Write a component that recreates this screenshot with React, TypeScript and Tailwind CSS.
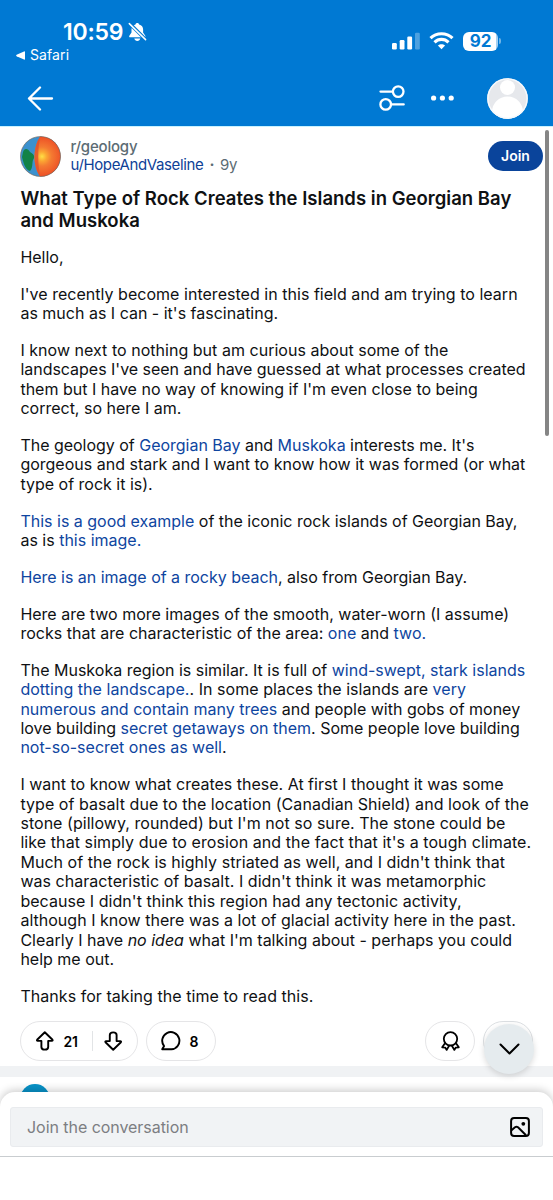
import React from "react";

function L({ children }: { children: React.ReactNode }) {
  return <span className="text-[#0e45a0]">{children}</span>;
}

function Para({ children }: { children: React.ReactNode }) {
  return <p className="whitespace-nowrap">{children}</p>;
}

function StatusBar() {
  return (
    <div className="flex h-[70px] shrink-0 justify-between">
      <div className="pl-4 pt-[18px]">
        <div className="flex h-7 items-center pl-[47px]">
          <span className="text-[23px] font-semibold leading-7 tracking-[-0.250px]">10:59</span>
          <svg className="ml-[4.500px]" width="19" height="20" viewBox="0 0 19 20" fill="none">
            <path d="M9.3 1c1 0 1.6.6 1.800 1.400 2.600.7 4 2.600 4 5v3.200l2 2.800c.7 1 .4 1.900-.8 1.900H2.300c-1.200 0-1.500-.9-.8-1.900l2-2.800V7.400c0-2.400 1.400-4.300 4-5C7.700 1.600 8.300 1 9.300 1z" fill="white" />
            <path d="M6.300 16.500h6c-.4 1.600-1.400 2.400-3 2.400s-2.600-.8-3-2.400z" fill="white" />
            <path d="M1.600 1.500l16 16" stroke="#0079d3" strokeWidth="3.400" />
            <path d="M1.300 1.600l16.300 16" stroke="white" strokeWidth="1.500" strokeLinecap="round" />
          </svg>
        </div>
        <div className="flex h-[18px] items-center gap-[5px]">
          <svg width="9" height="9" viewBox="0 0 9 9"><path d="M.6 3.700L8 .4Q9 0 9 1v7q0 1-1 .6L.6 5.300Q-.4 4.500.6 3.700z" fill="white" /></svg>
          <span className="text-[14px] leading-[18px] tracking-[0.100px]">Safari</span>
        </div>
      </div>
      <div className="mt-[31px] flex h-[20px] items-center pr-[52px]">
        <svg width="28" height="18" viewBox="0 0 28 18" fill="white">
          <rect x="0" y="11" width="4.800" height="6.500" rx="1.200" />
          <rect x="7.700" y="8" width="4.800" height="9.500" rx="1.200" />
          <rect x="15.300" y="4.600" width="4.800" height="12.900" rx="1.200" />
          <rect x="23" y=".7" width="4.800" height="16.800" rx="1.200" opacity=".3" />
        </svg>
        <svg className="ml-[9px]" width="25" height="18" viewBox="0 0 25 18" fill="none" stroke="white" strokeWidth="3.100">
          <path d="M1.500 6.200C7.500.3 17.500.3 23.500 6.200" />
          <path d="M5.500 10.300c4-3.900 10-3.900 14 0" />
          <path d="M12.500 17.300l-3.600-3.700c2.100-1.900 5.100-1.900 7.200 0z" fill="white" stroke="none" />
        </svg>
        <div className="ml-[9px] flex h-[19px] w-[35px] items-center justify-center rounded-[6px] bg-[linear-gradient(to_right,white_33px,#a6d1f1_33px)] text-[17px] font-bold leading-none tracking-[-0.200px] text-[#0079d3]">92</div>
        <div className="ml-[1px] h-[6px] w-[2px] rounded-r-full bg-[#71b5e6]" />
      </div>
    </div>
  );
}

function NavBar() {
  return (
    <div className="flex h-14 items-center pl-[27px] pr-[25px]">
      <svg width="27" height="25" viewBox="0 0 27 25" fill="none" stroke="white" strokeWidth="2.300" strokeLinecap="round" strokeLinejoin="round"><path d="M25 12.500H2M13 1.500L2 12.500l11 11" /></svg>
      <svg className="ml-auto" width="26" height="26" viewBox="0 0 26 26" fill="none" stroke="white" strokeWidth="2.300" strokeLinecap="round">
        <circle cx="19.200" cy="6.600" r="5.300" /><path d="M1.500 6.600h12.200M12.300 19.400h12.400" /><circle cx="6.700" cy="19.400" r="5.300" />
      </svg>
      <svg className="ml-[25px]" width="25" height="6" viewBox="0 0 25 6" fill="white"><circle cx="3.600" cy="3" r="2.600" /><circle cx="12.400" cy="3" r="2.600" /><circle cx="21.200" cy="3" r="2.600" /></svg>
      <svg className="ml-[32px]" width="41" height="41" viewBox="0 0 41 41">
        <defs><clipPath id="avatar"><circle cx="20.500" cy="20.500" r="20.300" /></clipPath></defs>
        <g clipPath="url(#avatar)"><rect width="41" height="41" fill="#e6e8ec" /><circle cx="20.500" cy="9.500" r="7.500" fill="white" /><circle cx="20.500" cy="34" r="15.500" fill="white" /></g>
        <circle cx="20.500" cy="20.500" r="19.600" fill="none" stroke="#f6f9fc" strokeWidth="1.400" />
      </svg>
    </div>
  );
}

function GeologyLogo() {
  return (
    <svg width="41" height="41" viewBox="0 0 41 41" className="shrink-0">
      <defs>
        <clipPath id="globe"><circle cx="20.500" cy="20.500" r="20" /></clipPath>
        <radialGradient id="core" cx="22" cy="20.500" r="19" gradientUnits="userSpaceOnUse">
          <stop offset="0" stopColor="#ffdf45" /><stop offset=".25" stopColor="#fba532" /><stop offset=".5" stopColor="#f47b32" /><stop offset="1" stopColor="#ee5327" />
        </radialGradient>
      </defs>
      <g clipPath="url(#globe)">
        <rect width="41" height="41" fill="#3c91ce" />
        <path d="M3 16c1-4 5-4 7 0 3 2 6 4 3 8-1 3 0 8-3 11C5 34 3 25 2 21z" fill="#128247" />
        <path d="M20.500 0C12.500 11 12.500 31 20.500 41H41V0z" fill="url(#core)" />
        <path d="M20.500 0C12.500 11 12.500 31 20.500 41 17.500 29 17.500 12 20.500 0z" fill="#df502c" opacity=".8" />
      </g>
      <circle cx="20.500" cy="20.500" r="20" fill="none" stroke="#79634f" strokeWidth=".6" />
    </svg>
  );
}

function PostHeader() {
  return (
    <div className="flex items-center pr-[10px]">
      <GeologyLogo />
      <div className="ml-[9px] text-[15px] leading-[18px]">
        <div className="font-medium tracking-[-0.200px] text-[#5c6c74]">r/geology</div>
        <div className="tracking-[-0.370px] text-[#5c6c74]"><span className="text-[#0e4197]">u/HopeAndVaseline</span><span className="mx-[6px] font-bold">·</span>9y</div>
      </div>
      <button className="ml-auto h-[30px] w-[55px] rounded-full bg-[#0a449b] text-[14px] font-semibold leading-[30px] text-white">Join</button>
    </div>
  );
}

function PostBody() {
  return (
    <div className="mt-[17px] flex flex-col gap-[17.400px] text-[16px] leading-[19.400px] text-[#0f1113]">
      <Para>Hello,</Para>
      <Para><span className="tracking-[0.030px]">I've recently become interested in this field and am trying to learn</span><br />as much as I can - it's fascinating.</Para>
      <Para><span className="tracking-[0.030px]">I know next to nothing but am curious about some of the</span><br /><span className="tracking-[-0.020px]">landscapes I've seen and have guessed at what processes created</span><br />them but I have no way of knowing if I'm even close to being<br />correct, so here I am.</Para>
      <Para><span className="tracking-[-0.020px]">The geology of <L>Georgian Bay</L> and <L>Muskoka</L> interests me. It's</span><br />gorgeous and stark and I want to know how it was formed (or what<br />type of rock it is).</Para>
      <Para><L>This is a good example</L> of the iconic rock islands of Georgian Bay,<br />as is <L>this image.</L></Para>
      <Para><span className="tracking-[-0.020px]"><L>Here is an image of a rocky beach</L>, also from Georgian Bay.</span></Para>
      <Para>Here are two more images of the smooth, water-worn (I assume)<br /><span className="tracking-[0.020px]">rocks that are characteristic of the area: <L>one</L> and <L>two.</L></span></Para>
      <Para>The Muskoka region is similar. It is full of <L>wind-swept, stark islands<br /><span className="tracking-[0.040px]">dotting the landscape.</span></L><span className="tracking-[0.040px]">. In some places the islands are <L>very</L></span><L><br />numerous and contain many trees</L> and people with gobs of money<br />love building <L>secret getaways on them</L>. Some people love building<br /><L>not-so-secret ones as well</L>.</Para>
      <Para>I want to know what creates these. At first I thought it was some<br /><span className="tracking-[0.050px]">type of basalt due to the location (Canadian Shield) and look of the</span><br /><span className="tracking-[0.040px]">stone (pillowy, rounded) but I'm not so sure. The stone could be</span><br /><span className="tracking-[0.080px]">like that simply due to erosion and the fact that it's a tough climate.</span><br /><span className="tracking-[0.040px]">Much of the rock is highly striated as well, and I didn't think that</span><br /><span className="tracking-[0.040px]">was characteristic of basalt. I didn't think it was metamorphic</span><br /><span className="tracking-[0.040px]">because I didn't think this region had any tectonic activity,</span><br /><span className="tracking-[0.020px]">although I know there was a lot of glacial activity here in the past.</span><br />Clearly I have <em>no idea</em> what I'm talking about - perhaps you could<br />help me out.</Para>
      <Para><span className="tracking-[0.050px]">Thanks for taking the time to read this.</span></Para>
    </div>
  );
}

const arrow = "M8.800 1.200L1.100 8.800q-.5 1 .6 1.100h3.700v6q0 2.700 3.400 2.700t3.400-2.700v-6h3.700q1.100-.1.600-1.100z";

function Actions() {
  return (
    <div className="mt-[15px] flex pr-[20px] text-[14px] font-semibold text-black">
      <div className="flex h-10 w-[118px] items-center rounded-full border border-[#e5e5e7] pl-[15px]">
        <svg width="18" height="20" viewBox="0 0 18 20" fill="none" stroke="currentColor" strokeWidth="1.900" strokeLinejoin="round"><path d={arrow} /></svg>
        <span className="ml-[9px] w-[29px]">21</span>
        <span className="h-5 w-px bg-[#e2e4e6]" />
        <svg className="ml-[11px] rotate-180" width="18" height="20" viewBox="0 0 18 20" fill="none" stroke="currentColor" strokeWidth="1.900" strokeLinejoin="round"><path d={arrow} /></svg>
      </div>
      <div className="ml-2 flex h-10 w-[70px] items-center rounded-full border border-[#e5e5e7] pl-[14px]">
        <svg width="20" height="20" viewBox="0 0 20 20" fill="none" stroke="currentColor" strokeWidth="1.900" strokeLinejoin="round"><path d="M1.200 18.300l1.900-3.200A8.600 8.600 0 1 1 10.400 18.300z" /></svg>
        <span className="ml-2">8</span>
      </div>
      <div className="ml-auto flex h-10 w-[50px] items-center justify-center rounded-full border border-[#e5e5e7]">
        <svg width="19" height="20" viewBox="0 0 19 20" fill="none" stroke="currentColor" strokeWidth="1.800" strokeLinejoin="round">
          <circle cx="9.500" cy="7.800" r="6.700" /><path d="M4 12.300l-2.800 4 3 .3 1.500 2.300 2.700-4.600M15 12.300l2.800 4-3 .3-1.500 2.300-2.700-4.600" />
        </svg>
      </div>
      <div className="relative ml-2 h-10 w-[50px] rounded-full border border-[#dcdfe2]">
        <div className="absolute left-0 top-[1.500px] flex size-[50px] items-center justify-center rounded-full bg-[#e5ebee] shadow-[0_2px_6px_rgba(0,0,0,0.15)]">
          <svg width="21" height="12" viewBox="0 0 21 12" fill="none" stroke="currentColor" strokeWidth="2" strokeLinecap="round" strokeLinejoin="round"><path d="M1.500 1.500l9 9 9-9" /></svg>
        </div>
      </div>
    </div>
  );
}

function Composer() {
  return (
    <div className="relative mt-[-4px] h-[108px] rounded-t-[15px] bg-white shadow-[0_-2px_9px_rgba(0,0,0,0.200)]">
      <div className="h-[65px] border-b border-[#c9cdd0] px-[10px] pt-[15px]">
        <div className="flex h-10 items-center justify-between rounded-[3px] border border-[#e9ebee] bg-[#f1f3f5] pl-4 pr-3">
          <span className="text-[16px] tracking-[-0.050px] text-[#7c7e82]">Join the conversation</span>
          <svg width="20" height="20" viewBox="0 0 20 20" fill="none" stroke="black" strokeWidth="2" strokeLinejoin="round">
            <rect x="1.100" y="1.100" width="17.800" height="17.800" rx="3" /><circle cx="13.300" cy="6.800" r="1.900" fill="black" stroke="none" /><path d="M1.500 13.300L5 10.300q1.500-1.100 3 0l8 8" />
          </svg>
        </div>
      </div>
    </div>
  );
}

export default function App() {
  return (
    <main className="flex h-[1200px] w-[553px] flex-col overflow-hidden bg-white font-['Inter',sans-serif]">
      <header className="h-[126px] shrink-0 bg-[#0079d3] text-white"><StatusBar /><NavBar /></header>
      <div className="relative h-[940px] shrink-0 border-t border-[#c9f2ff] pl-[20.400px] pt-[8.500px]">
        <PostHeader />
        <h1 className="mt-[10.500px] whitespace-nowrap text-[18.500px] font-semibold leading-[22px] tracking-[0.020px] text-[#0f1113]">What Type of Rock Creates the Islands in Georgian Bay<br />and Muskoka</h1>
        <PostBody />
        <Actions />
        <div className="absolute right-[4px] top-[3px] h-[306px] w-1 rounded-full bg-[#858585]" />
      </div>
      <div className="h-[11px] shrink-0 bg-[#f0f2f4]" />
      <div className="h-[19px] shrink-0 overflow-hidden pl-5 pt-[7px]"><div className="size-[30px] rounded-full bg-[#0892c7]" /></div>
      <Composer />
    </main>
  );
}
